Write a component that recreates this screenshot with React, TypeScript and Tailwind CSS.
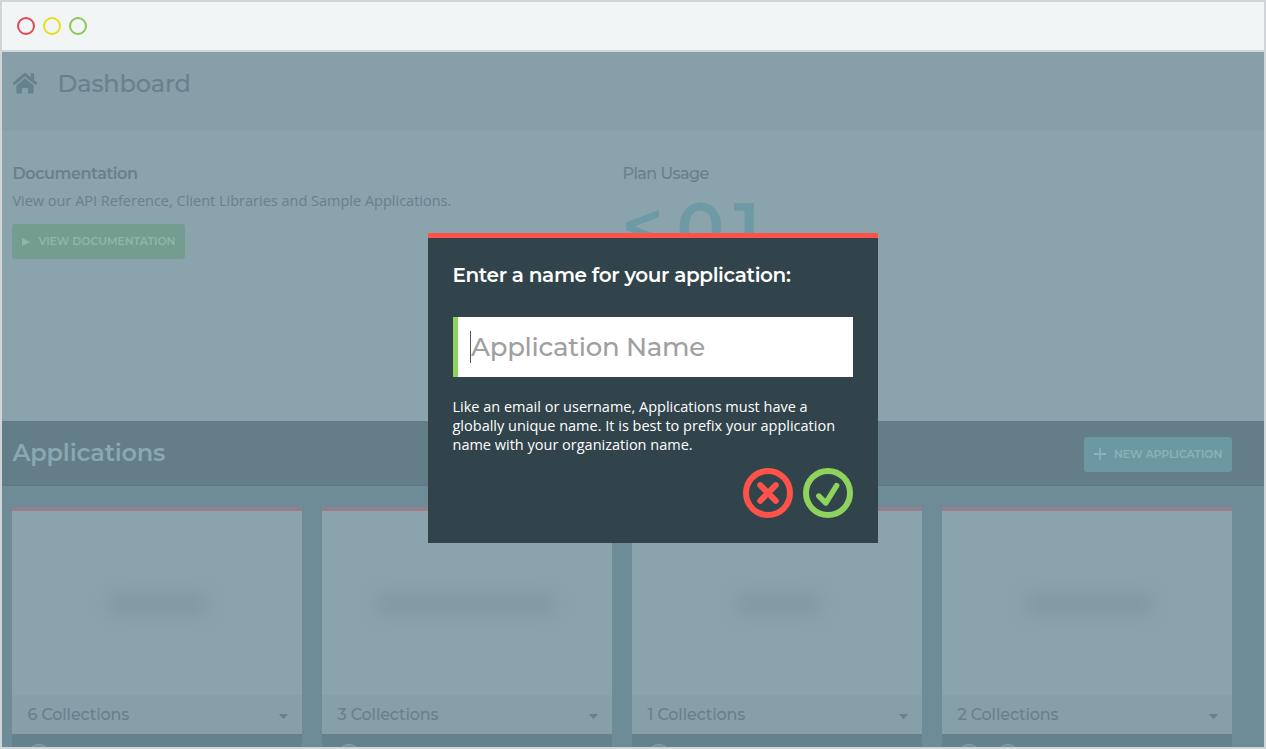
type Card = { count: number; blurLeft: string; blurWidth: string; avatars: number };

const cards: Card[] = [
  { count: 6, blurLeft: "ml-[97px]", blurWidth: "w-[98px]", avatars: 1 },
  { count: 3, blurLeft: "ml-[54px]", blurWidth: "w-[179px]", avatars: 1 },
  { count: 1, blurLeft: "ml-[104px]", blurWidth: "w-[84px]", avatars: 1 },
  { count: 2, blurLeft: "ml-[84px]", blurWidth: "w-[127px]", avatars: 2 },
];

function TitleBar() {
  return (
    <div className="flex h-[50px] shrink-0 items-center gap-[8px] border-b-2 border-[#d0d6d7] bg-[#f1f5f6] pl-[15px]">
      <span className="size-[18px] rounded-full border-2 border-[#e34a50]" />
      <span className="size-[18px] rounded-full border-2 border-[#e6de1c]" />
      <span className="size-[18px] rounded-full border-2 border-[#8cc653]" />
    </div>
  );
}

function HomeIcon() {
  return (
    <svg className="mt-[4px] h-[22px] w-[25px]" viewBox="0 0 25 22" fill="currentColor">
      <path d="M1.6 11.2 12 2.4l10.4 8.8" fill="none" stroke="currentColor" strokeWidth="3" strokeLinecap="round" strokeLinejoin="round" />
      <path d="M17.7 1.3h3.4v7l-3.4-2.7Z" />
      <path d="M12 6.3 20.6 13.4v6.8q0 1.3-1.3 1.3h-4.2v-4.5q0-.9-.9-.9H9.8q-.9 0-.9.9v4.5H4.7q-1.3 0-1.3-1.3v-6.8Z" />
    </svg>
  );
}

function AppCard({ card }: { card: Card }) {
  return (
    <div className="flex w-[290px] shrink-0 flex-col">
      <div className="h-[188px] border-t-4 border-[#957f8c] bg-[#8ba3ad] pt-[82px]">
        <div className={`h-[22px] rounded-lg bg-[#7f99a3] blur-[9px] ${card.blurLeft} ${card.blurWidth}`} />
      </div>
      <div className="flex h-[39px] items-center justify-between bg-[#869fa9] pr-[14px] pl-[15.5px] text-[#66828d]">
        <span className="text-[16px] leading-[22px] font-medium tracking-[-0.15px] whitespace-nowrap">
          {card.count} Collections
        </span>
        <svg className="mt-[3px] h-[5px] w-[9px]" viewBox="0 0 9 5" fill="currentColor">
          <path d="M.8 0h7.4q1 0 .3.8L5.1 4.6q-.6.6-1.2 0L.5.8Q-.2 0 .8 0Z" />
        </svg>
      </div>
      <div className="flex h-[13px] gap-[15px] overflow-hidden bg-[#64828e] pt-[10px] pl-[15px]">
        {Array.from({ length: card.avatars }, (_, i) => (
          <span key={i} className="size-6 shrink-0 rounded-full border border-[#8ba3ad] bg-[#748f9b]" />
        ))}
      </div>
    </div>
  );
}

function Dialog() {
  return (
    <div className="absolute top-[231px] left-[425.5px] h-[310px] w-[450px] border-t-[5px] border-[#ff5248] bg-[#31434b] px-[25px]">
      <h2 className="pt-[22px] text-[20px] leading-[30px] font-semibold tracking-[-0.37px] whitespace-nowrap text-white">
        Enter a name for your application:
      </h2>
      <div className="mt-[27px] flex h-[60px] items-center border-l-[5px] border-[#8ed35d] bg-white pl-[12.5px]">
        <span className="h-8 w-px bg-[#555]" />
        <span className="text-[26px] font-medium tracking-[-0.3px] whitespace-nowrap text-[#a0a0a0]">
          Application Name
        </span>
      </div>
      <p className="mt-[20px] font-['Open_Sans',sans-serif] text-[14.5px] leading-[19px] font-medium whitespace-nowrap text-white">
        Like an email or username, Applications must have a
        <br />
        globally unique name. It is best to prefix your application
        <br />
        name with your organization name.
      </p>
      <div className="mt-[14px] flex justify-end gap-[10px]">
        <svg className="size-[50px]" viewBox="0 0 50 50" fill="none" stroke="#ff5248" strokeWidth="6">
          <circle cx="25" cy="25" r="22" />
          <path d="m17.2 17.2 15.6 15.6M32.8 17.2 17.2 32.8" strokeLinecap="round" />
        </svg>
        <svg className="size-[50px]" viewBox="0 0 50 50" fill="none" stroke="#8ed35d" strokeWidth="6">
          <circle cx="25" cy="25" r="22" />
          <path d="m15.8 28 7 7L33.7 17.5" strokeWidth="5.4" strokeLinecap="round" strokeLinejoin="round" />
        </svg>
      </div>
    </div>
  );
}

export default function App() {
  return (
    <div className="relative flex h-[749px] w-[1266px] flex-col overflow-hidden border-2 border-[#d0d6d7] font-[Montserrat,Inter,sans-serif]">
      <TitleBar />
      <header className="flex h-[79px] shrink-0 items-start bg-[#869fa9] pt-[16px] pl-[11px] text-[#66828d]">
        <HomeIcon />
        <h1 className="ml-[19.5px] text-[24px] leading-[32px] font-medium tracking-[-0.12px]">Dashboard</h1>
      </header>
      <section className="flex h-[290px] shrink-0 bg-[#8ba3ad] pt-[32px] pl-[10.4px] text-[#66828d]">
        <div className="w-[610px]">
          <h3 className="text-[16px] leading-[22px] font-semibold tracking-[-0.4px]">Documentation</h3>
          <p className="mt-[6px] font-['Open_Sans',sans-serif] text-[14.5px] leading-[20px] whitespace-nowrap">
            View our API Reference, Client Libraries and Sample Applications.
          </p>
          <button className="mt-[13px] flex h-[35px] w-[173px] items-center rounded-[3px] bg-[#749d8f] pl-[10px] text-[11px] font-semibold tracking-[-0.07px] whitespace-nowrap text-[#8fb5aa]">
            <svg className="mr-[8px] h-[8px] w-[8px]" viewBox="0 0 8 8" fill="currentColor">
              <path d="m0 0 8 4-8 4Z" />
            </svg>
            VIEW DOCUMENTATION
          </button>
        </div>
        <div>
          <h3 className="text-[16px] leading-[22px] font-medium tracking-[-0.55px]">Plan Usage</h3>
          <div className="mt-[11px] flex text-[71px] leading-[62px] font-semibold text-[#6d9aa4]">
            <span className="-mt-px -ml-px w-[55px]">&lt;</span>
            <span className="w-[57px]">0</span>
            <span>1</span>
          </div>
        </div>
      </section>
      <section className="flex h-[65px] shrink-0 items-center justify-between border-b border-[#5d7983] bg-[#637e88] pt-[2px] pr-[32px] pl-[10.4px]">
        <h2 className="mb-[2px] text-[24px] leading-[36px] font-semibold tracking-[-0.15px] text-[#8ba7b2]">Applications</h2>
        <button className="flex h-[35px] w-[148px] items-center rounded-[3px] bg-[#6c99a1] pl-[10px] text-[11px] font-semibold tracking-[-0.1px] whitespace-nowrap text-[#8bb0b9]">
          <svg className="mr-[8px] size-[12px]" viewBox="0 0 12 12" fill="none" stroke="currentColor" strokeWidth="1.8">
            <path d="M6 0v12M0 6h12" />
          </svg>
          NEW APPLICATION
        </button>
      </section>
      <section className="flex min-h-0 grow gap-5 overflow-hidden bg-[#6d8c97] pt-[21px] pl-[10px]">
        {cards.map((card) => (
          <AppCard key={card.count} card={card} />
        ))}
      </section>
      <Dialog />
    </div>
  );
}
